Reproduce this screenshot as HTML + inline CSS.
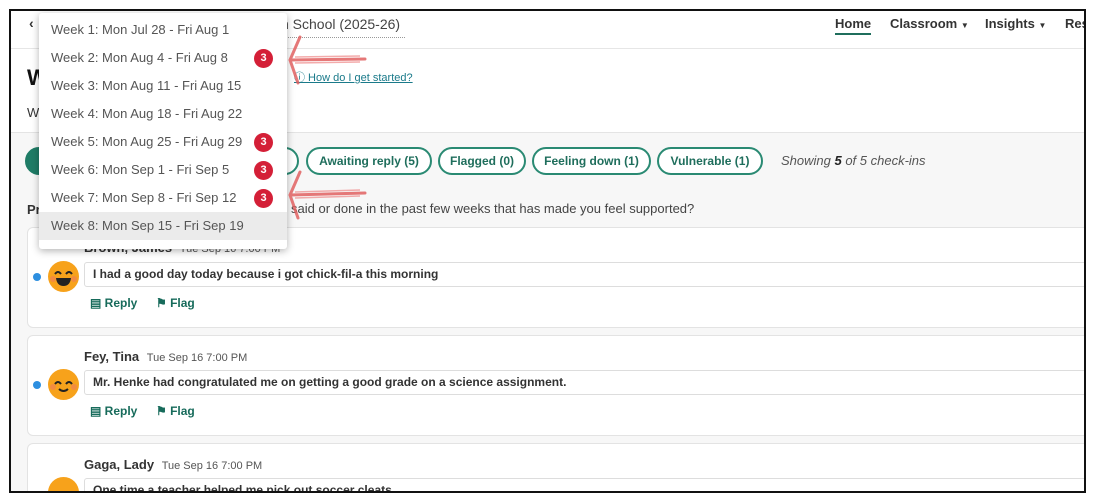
<!DOCTYPE html>
<html><head><meta charset="utf-8"><style>
*{box-sizing:border-box;margin:0;padding:0}
html,body{width:1099px;height:500px;overflow:hidden}
body{background:#fff;font-family:"Liberation Sans",sans-serif;position:relative;color:#333}
.frame{position:absolute;left:9px;top:9px;width:1077px;height:484px;border:2px solid #111;overflow:hidden;background:#f7f7f7}
.abs{position:absolute}
.hdr{left:0;top:0;width:100%;height:38px;background:#fff;border-bottom:1px solid #e6e6e6}
.top{left:0;top:38px;width:100%;height:84px;background:#fff;border-bottom:1px solid #e4e4e4}
.pill{position:absolute;top:136px;height:28px;border:2px solid #2a8a73;border-radius:14px;color:#1f6e5c;font-weight:bold;font-size:12px;line-height:24px;text-align:center;background:#fff}
.card{position:absolute;left:16px;width:1100px;height:101px;background:#fff;border:1px solid #e3e3e3;border-radius:6px}
.msg{position:absolute;left:56px;width:1100px;height:25px;border:1px solid #ddd;border-radius:3px;font-size:12px;font-weight:bold;line-height:23px;padding-left:8px;color:#333}
.face{position:absolute;left:20px;width:31px;height:31px}
.dot{position:absolute;left:5px;width:8px;height:8px;border-radius:50%;background:#2d8fe0}
.act{position:absolute;font-size:12px;font-weight:bold;color:#176b5b}
.name{position:absolute;left:56px;font-size:13px;font-weight:bold;color:#333}
.name span{font-weight:normal;font-size:11px;color:#555;margin-left:4px}
.dd{left:28px;top:2px;width:248px;height:236px;background:#fff;box-shadow:0 2px 8px rgba(0,0,0,.3);border-radius:3px}
.it{position:absolute;left:0;width:248px;height:28px;font-size:13px;color:#555;line-height:28px;padding-left:12px}
.b{position:absolute;left:215px;top:5px;width:19px;height:19px;border-radius:50%;background:#d41f37;color:#fff;font-size:11px;font-weight:bold;line-height:19px;text-align:center}
</style></head><body>
<div class="frame">
 <div class="abs hdr"></div>
 <div class="abs" style="left:18px;top:4px;font-size:14px;font-weight:bold;color:#333">&lsaquo;</div>
 <div class="abs" style="left:270px;top:5px;font-size:14px;color:#444">n School (2025-26)</div>
 <div class="abs" style="left:270px;top:26px;width:124px;border-top:1px dotted #999"></div>
 <div class="abs" style="left:824px;top:5px;font-size:13px;font-weight:bold;color:#333;border-bottom:2px solid #1f6e5c;padding-bottom:2px">Home</div>
 <div class="abs" style="left:879px;top:5px;font-size:13px;font-weight:bold;color:#333">Classroom <span style="font-size:8px">▼</span></div>
 <div class="abs" style="left:974px;top:5px;font-size:13px;font-weight:bold;color:#333">Insights <span style="font-size:8px">▼</span></div>
 <div class="abs" style="left:1054px;top:5px;font-size:13px;font-weight:bold;color:#333">Res</div>
 <div class="abs top"></div>
 <div class="abs" style="left:16px;top:54px;font-size:22px;font-weight:bold;color:#111">W</div>
 <div class="abs" style="left:16px;top:94px;font-size:13px;color:#333">W</div>
 <div class="abs" style="left:283px;top:58px;font-size:11px;color:#1a7a8a;text-decoration:underline">ⓘ How do I get started?</div>
 <div class="pill" style="left:14px;width:60px;background:#1f7c66;border-color:#1f7c66"></div>
 <div class="pill" style="left:250px;width:38px"></div>
 <div class="pill" style="left:295px;width:126px">Awaiting reply (5)</div>
 <div class="pill" style="left:427px;width:88px">Flagged (0)</div>
 <div class="pill" style="left:521px;width:119px">Feeling down (1)</div>
 <div class="pill" style="left:646px;width:106px">Vulnerable (1)</div>
 <div class="abs" style="left:770px;top:142px;font-size:13px;font-style:italic;color:#555">Showing <b style="color:#222">5</b> of 5 check-ins</div>
 <div class="abs" style="left:16px;top:191px;font-size:13px;color:#333"><b>Pr</b></div>
 <div class="abs" style="left:280px;top:190px;font-size:13px;color:#444">said or done in the past few weeks that has made you feel supported?</div>
 <div class="card" style="top:216px">
  <div class="name" style="top:12px">Brown, James <span>Tue Sep 16 7:00 PM</span></div>
  <div class="dot" style="top:45px"></div>
  <svg class="face" style="top:33px" viewBox="0 0 31 31"><circle cx="15.5" cy="15.5" r="15.5" fill="#f7a21b"/><circle cx="5" cy="18" r="3" fill="#f07b5a" opacity=".6"/><circle cx="26" cy="18" r="3" fill="#f07b5a" opacity=".6"/><path d="M7 13 q3-4 6 0 M18 13 q3-4 6 0" stroke="#222" stroke-width="2" fill="none"/><path d="M8 17 h15 q-1 8 -7.5 8 q-6.5 0 -7.5 -8z" fill="#222"/></svg>
  <div class="msg" style="top:34px">I had a good day today because i got chick-fil-a this morning</div>
  <div class="act" style="left:62px;top:68px">▤ Reply</div><div class="act" style="left:128px;top:68px">⚑ Flag</div>
 </div>
 <div class="card" style="top:324px">
  <div class="name" style="top:13px">Fey, Tina <span>Tue Sep 16 7:00 PM</span></div>
  <div class="dot" style="top:45px"></div>
  <svg class="face" style="top:33px" viewBox="0 0 31 31"><circle cx="15.5" cy="15.5" r="15.5" fill="#f7a21b"/><circle cx="5" cy="18" r="3" fill="#f07b5a" opacity=".6"/><circle cx="26" cy="18" r="3" fill="#f07b5a" opacity=".6"/><path d="M7 15 q3-4 6 0 M18 15 q3-4 6 0" stroke="#222" stroke-width="2" fill="none"/><path d="M11 20 q4.5 4 9 0" stroke="#222" stroke-width="2" fill="none"/></svg>
  <div class="msg" style="top:34px">Mr. Henke had congratulated me on getting a good grade on a science assignment.</div>
  <div class="act" style="left:62px;top:68px">▤ Reply</div><div class="act" style="left:128px;top:68px">⚑ Flag</div>
 </div>
 <div class="card" style="top:432px">
  <div class="name" style="top:13px">Gaga, Lady <span>Tue Sep 16 7:00 PM</span></div>
  <svg class="face" style="top:33px" viewBox="0 0 31 31"><circle cx="15.5" cy="15.5" r="15.5" fill="#f7a21b"/></svg>
  <div class="msg" style="top:34px">One time a teacher helped me pick out soccer cleats</div>
 </div>
 <div class="abs dd">
  <div class="it" style="top:3px">Week 1: Mon Jul 28 - Fri Aug 1</div>
  <div class="it" style="top:31px">Week 2: Mon Aug 4 - Fri Aug 8<div class="b">3</div></div>
  <div class="it" style="top:59px">Week 3: Mon Aug 11 - Fri Aug 15</div>
  <div class="it" style="top:87px">Week 4: Mon Aug 18 - Fri Aug 22</div>
  <div class="it" style="top:115px">Week 5: Mon Aug 25 - Fri Aug 29<div class="b">3</div></div>
  <div class="it" style="top:143px">Week 6: Mon Sep 1 - Fri Sep 5<div class="b">3</div></div>
  <div class="it" style="top:171px">Week 7: Mon Sep 8 - Fri Sep 12<div class="b">3</div></div>
  <div class="it" style="top:199px;background:#ebebeb">Week 8: Mon Sep 15 - Fri Sep 19</div>
 </div>
</div>
<svg class="abs" style="left:0;top:0" width="1099" height="500">
 <g stroke="#e06060" stroke-width="3" fill="none" stroke-linecap="round" opacity=".85">
  <path d="M290 60 L365 59 M290 60 L300 37 M290 60 L298 83"/>
  <path d="M290 195 L365 193 M290 195 L300 172 M290 195 L298 218"/>
 </g>
 <g stroke="#e88" stroke-width="1.5" fill="none" opacity=".7">
  <path d="M295 57 L360 56 M295 63 L360 62"/>
  <path d="M295 192 L360 190 M295 198 L360 196"/>
 </g>
</svg>
</body></html>
